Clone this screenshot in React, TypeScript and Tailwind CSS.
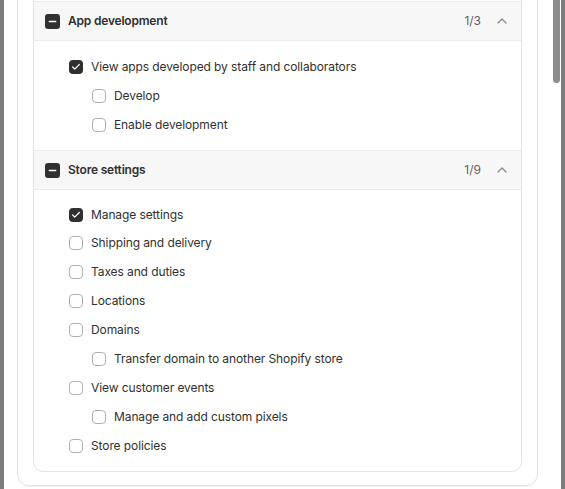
import { Check, Minus } from 'lucide-react';

interface Perm {
  label: string;
  checked?: boolean;
  indent?: boolean;
}

interface Section {
  title: string;
  count: string;
  items: Perm[];
}

const SECTIONS: Section[] = [
  {
    title: 'App development',
    count: '1/3',
    items: [
      { label: 'View apps developed by staff and collaborators', checked: true },
      { label: 'Develop', indent: true },
      { label: 'Enable development', indent: true },
    ],
  },
  {
    title: 'Store settings',
    count: '1/9',
    items: [
      { label: 'Manage settings', checked: true },
      { label: 'Shipping and delivery' },
      { label: 'Taxes and duties' },
      { label: 'Locations' },
      { label: 'Domains' },
      { label: 'Transfer domain to another Shopify store', indent: true },
      { label: 'View customer events' },
      { label: 'Manage and add custom pixels', indent: true },
      { label: 'Store policies' },
    ],
  },
];

function Box({ checked }: { checked?: boolean }) {
  if (checked) {
    return (
      <span className="w-[14px] h-[14px] rounded-[4px] bg-[#303030] flex items-center justify-center shrink-0">
        <Check size={10} strokeWidth={3} className="text-white" />
      </span>
    );
  }
  return <span className="w-[14px] h-[14px] rounded-[4px] border border-[#b0b0b0] bg-white shrink-0" />;
}

export default function App() {
  return (
    <div
      className="h-[489px] w-[565px] overflow-hidden bg-[#7b7b7b] flex"
      style={{ fontFamily: 'Inter, "Noto Sans", sans-serif' }}
    >
      <div className="ml-[4px] w-[557px] h-full bg-white relative">
        <div className="absolute right-[1px] top-0 w-[7px] h-[83px] rounded-b-full bg-[#8d8d8d]" />

        <div className="ml-[13px] w-[521px] -mt-[60px] border border-[#e3e3e3] rounded-xl px-[15px] pt-[15px] pb-[13px] shadow-[0_1px_0_rgba(0,0,0,0.05)]">
          <div className="border border-[#e3e3e3] rounded-[10px] overflow-hidden">
            <div className="h-[44px]" />
            {SECTIONS.map((s, i) => (
              <div key={s.title} className="border-t border-[#ebebeb]">
                <div className="h-[39px] bg-[#f7f7f7] border-b border-[#ebebeb] flex items-center pl-[11px] pr-[14px]">
                  <span className="w-[15px] h-[15px] rounded-[3px] bg-[#303030] flex items-center justify-center">
                    <Minus size={11} strokeWidth={3} className="text-white" />
                  </span>
                  <span className="ml-[8px] text-[12px] font-semibold tracking-[-0.2px] text-[#303030]">{s.title}</span>
                  <span className="ml-auto text-[12px] text-[#616161]">{s.count}</span>
                  <svg width="10" height="6" viewBox="0 0 10 6" className="ml-[16px]">
                    <polyline points="1,5 5,1 9,5" fill="none" stroke="#8a8a8a" strokeWidth="1.3" strokeLinecap="round" strokeLinejoin="round" />
                  </svg>
                </div>
                <div className={`${i === 0 ? 'pt-[12px]' : 'pt-[10px]'} pb-[10.5px]`}>
                  {s.items.map((it) => (
                    <div
                      key={it.label}
                      className={`h-[28.875px] flex items-center gap-[8px] ${it.indent ? 'pl-[58px]' : 'pl-[35px]'}`}
                    >
                      <Box checked={it.checked} />
                      <span className="text-[12px] tracking-[-0.1px] text-[#303030]">{it.label}</span>
                    </div>
                  ))}
                </div>
              </div>
            ))}
          </div>
        </div>
      </div>
    </div>
  );
}
